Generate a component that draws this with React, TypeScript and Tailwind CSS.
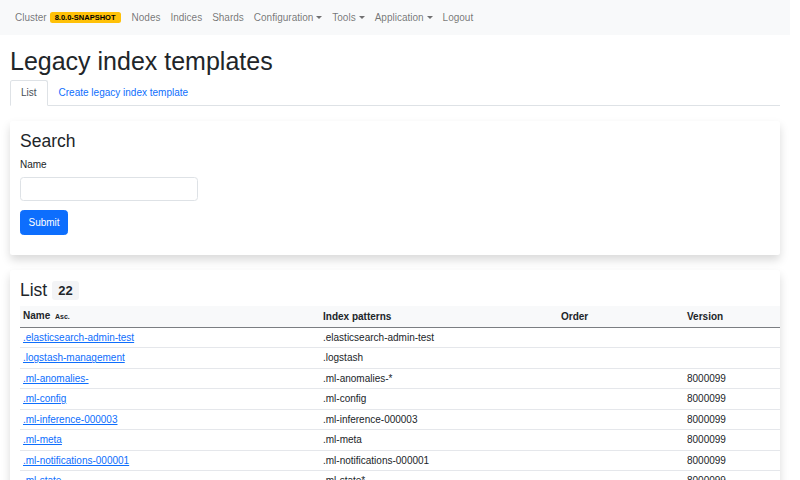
const rows = [
  { name: '.elasticsearch-admin-test', patterns: '.elasticsearch-admin-test', order: '', version: '' },
  { name: '.logstash-management', patterns: '.logstash', order: '', version: '' },
  { name: '.ml-anomalies-', patterns: '.ml-anomalies-*', order: '', version: '8000099' },
  { name: '.ml-config', patterns: '.ml-config', order: '', version: '8000099' },
  { name: '.ml-inference-000003', patterns: '.ml-inference-000003', order: '', version: '8000099' },
  { name: '.ml-meta', patterns: '.ml-meta', order: '', version: '8000099' },
  { name: '.ml-notifications-000001', patterns: '.ml-notifications-000001', order: '', version: '8000099' },
  { name: '.ml-state', patterns: '.ml-state*', order: '', version: '8000099' },
];

function Caret() {
  return (
    <span className="ml-[3px] inline-block align-[2.5px] w-0 h-0 border-t-[3px] border-t-current border-x-[3px] border-x-transparent" />
  );
}

function NavLink({ label, dropdown }: { label: string; dropdown?: boolean }) {
  return (
    <a className="px-[5px] py-[10px] leading-[15px] text-[rgba(0,0,0,0.55)] whitespace-nowrap">
      {label}
      {dropdown && <Caret />}
    </a>
  );
}

export default function App() {
  return (
    <div className="w-[790px] min-h-screen bg-white text-[10px] leading-[15px] text-[#212529] font-['Liberation_Sans',Arial,sans-serif]">
      {/* Navbar */}
      <nav className="h-[35px] bg-[#f8f9fa] flex items-center pl-[15px]">
        <span className="text-[rgba(0,0,0,0.55)] whitespace-nowrap">Cluster</span>
        <span className="ml-[3px] mr-[6px] bg-[#ffc107] text-black font-bold text-[7.5px] leading-[7.5px] px-[5px] py-[2px] rounded-[2.5px]">
          8.0.0-SNAPSHOT
        </span>
        <NavLink label="Nodes" />
        <NavLink label="Indices" />
        <NavLink label="Shards" />
        <NavLink label="Configuration" dropdown />
        <NavLink label="Tools" dropdown />
        <NavLink label="Application" dropdown />
        <NavLink label="Logout" />
      </nav>

      <main className="px-[10px]">
        <h1 className="mt-[11px] mb-[4px] text-[25px] leading-[30px] font-medium">Legacy index templates</h1>

        {/* Tabs */}
        <div className="flex border-b border-[#dee2e6]">
          <a className="-mb-px px-[10px] py-[4px] leading-[15px] bg-white border border-[#dee2e6] border-b-white rounded-t-[2.5px] text-[#495057]">
            List
          </a>
          <a className="px-[10px] py-[4px] leading-[15px] text-[#0d6efd] border border-transparent">
            Create legacy index template
          </a>
        </div>

        {/* Search card */}
        <section className="mt-[15px] bg-white rounded-[2.5px] shadow-[0_5px_10px_rgba(0,0,0,0.15)] p-[10px] pb-[20px]">
          <h3 className="text-[17.5px] leading-[21px] font-medium mb-[5px]">Search</h3>
          <label className="block mb-[5px]">Name</label>
          <input className="block w-[178px] h-[23.5px] border border-[#dee2e6] rounded-[3.5px] px-[7px] outline-none" />
          <button className="mt-[9px] bg-[#0d6efd] text-white px-[7.5px] py-[4px] leading-[15px] rounded-[3.5px] border border-[#0d6efd]">
            Submit
          </button>
        </section>

        {/* List card */}
        <section className="mt-[15px] bg-white rounded-[2.5px] shadow-[0_5px_10px_rgba(0,0,0,0.15)] p-[10px]">
          <h3 className="flex items-center gap-[5px] text-[17.5px] leading-[21px] font-medium mb-[5px]">
            List
            <span className="bg-[#f3f4f6] text-[13px] leading-[13px] font-bold px-[6px] py-[3px] rounded-[3px]">22</span>
          </h3>
          <table className="w-[760px] table-fixed border-collapse">
            <colgroup>
              <col className="w-[300px]" />
              <col className="w-[238px]" />
              <col className="w-[126px]" />
              <col className="w-[96px]" />
            </colgroup>
            <thead>
              <tr className="bg-[#f8f9fa] border-b-[1.5px] border-[#7b7e82] text-left">
                <th className="px-[3px] py-[2.5px] font-bold">
                  Name <span className="ml-[2px] text-[7px] font-bold">Asc.</span>
                </th>
                <th className="px-[3px] py-[2.5px] font-bold">Index patterns</th>
                <th className="px-[3px] py-[2.5px] font-bold">Order</th>
                <th className="px-[3px] py-[2.5px] font-bold">Version</th>
              </tr>
            </thead>
            <tbody>
              {rows.map((r) => (
                <tr key={r.name} className="border-b border-[#e5e7eb]">
                  <td className="px-[3px] py-[2.25px]">
                    <a className="text-[#0d6efd] underline">{r.name}</a>
                  </td>
                  <td className="px-[3px] py-[2.25px]">{r.patterns}</td>
                  <td className="px-[3px] py-[2.25px]">{r.order}</td>
                  <td className="px-[3px] py-[2.25px]">{r.version}</td>
                </tr>
              ))}
            </tbody>
          </table>
        </section>
      </main>
    </div>
  );
}
